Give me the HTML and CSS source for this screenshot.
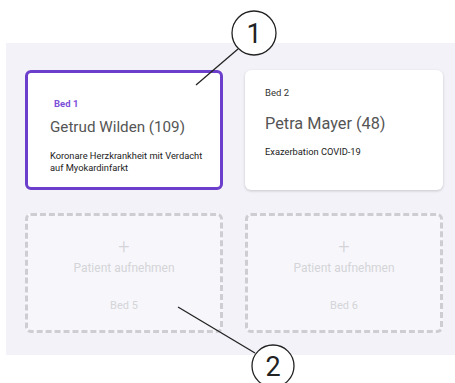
FILE: index.html
```html
<!DOCTYPE html>
<html lang="de">
<head>
  <meta charset="UTF-8" />
  <title>Stationsübersicht</title>
  <meta name="viewport" content="width=device-width, initial-scale=1.0" />
  <link rel="stylesheet" href="styles.css">
</head>
<body>

  <div class="board">
    <div class="bed-card selected">
      <div class="bed-label">Bed 1</div>
      <div class="patient-name">Getrud Wilden (109)</div>
      <div class="diagnosis">Koronare Herzkrankheit mit Verdacht auf Myokardinfarkt</div>
    </div>
    <div class="bed-card">
      <div class="bed-label">Bed 2</div>
      <div class="patient-name">Petra Mayer (48)</div>
      <div class="diagnosis">Exazerbation COVID-19</div>
    </div>
    <div class="empty-bed">
      <div class="plus">+</div>
      <div class="admit">Patient aufnehmen</div>
      <div class="empty-label">Bed 5</div>
    </div>
    <div class="empty-bed">
      <div class="plus">+</div>
      <div class="admit">Patient aufnehmen</div>
      <div class="empty-label">Bed 6</div>
    </div>
  </div>

  <!-- numbered callouts over the screenshot -->
  <svg class="callouts" width="455" height="383" viewBox="0 0 455 383">
    <g fill="none" stroke="#222" stroke-width="1.3">
      <line x1="196" y1="85" x2="238" y2="49" />
      <circle cx="254" cy="33" r="22" fill="#fff" />
      <line x1="178" y1="307" x2="255" y2="353" />
      <circle cx="273" cy="366" r="21" fill="#fff" />
    </g>
    <g font-family="Roboto, 'Liberation Sans', sans-serif" font-size="27" fill="#222" text-anchor="middle">
      <text x="254" y="43">1</text>
      <text x="273" y="376">2</text>
    </g>
  </svg>

</body>
</html>
```

FILE: styles.css
```css
html, body {
  margin: 0;
  padding: 0;
  background: white;
  font-family: Roboto, 'Liberation Sans', sans-serif;
}

body {
  position: relative;
  width: 455px;
  height: 383px;
  overflow: hidden;
  padding-top: 43px;
  box-sizing: border-box;
}

.board {
  margin-left: 6px;
  background: #f2f2f8;
  padding: 27px 12px 22px 19px;
  display: grid;
  grid-template-columns: 198px 198px;
  grid-auto-rows: 120px;
  column-gap: 22px;
  row-gap: 23px;
}

.bed-card {
  background: white;
  border-radius: 6px;
  padding: 17px 20px;
  box-shadow: 0 1px 3px rgba(0, 0, 0, 0.18);
  box-sizing: border-box;
}

.bed-card.selected {
  border: 3px solid #6b3fcb;
  box-shadow: none;
  padding: 25px 8px 0 22px;
}

.bed-label {
  font-size: 9.5px;
  color: #333;
  line-height: 12px;
}

.selected .bed-label {
  color: #7c4fd8;
  font-weight: 700;
  padding-left: 4px;
}

.patient-name {
  font-size: 16.3px;
  color: #555;
  line-height: 22px;
  margin-top: 14px;
}

.selected .patient-name {
  font-size: 15.2px;
  margin-top: 6px;
}

.diagnosis {
  font-size: 9.3px;
  color: #222;
  line-height: 12px;
  margin-top: 11px;
}

.selected .diagnosis {
  margin-top: 12px;
}

.empty-bed {
  border: 3px dashed #cdcdd2;
  border-radius: 6px;
  background: #f7f7fb;
  display: flex;
  flex-direction: column;
  align-items: center;
  color: #d4d4d8;
  box-sizing: border-box;
  padding-top: 20px;
}

.plus {
  font-size: 20px;
  font-weight: 300;
  line-height: 20px;
}

.admit {
  font-size: 12px;
  line-height: 14px;
  margin-top: 5px;
}

.empty-label {
  font-size: 11px;
  line-height: 14px;
  margin-top: 24px;
}

.callouts {
  position: absolute;
  top: 0;
  left: 0;
}
```
